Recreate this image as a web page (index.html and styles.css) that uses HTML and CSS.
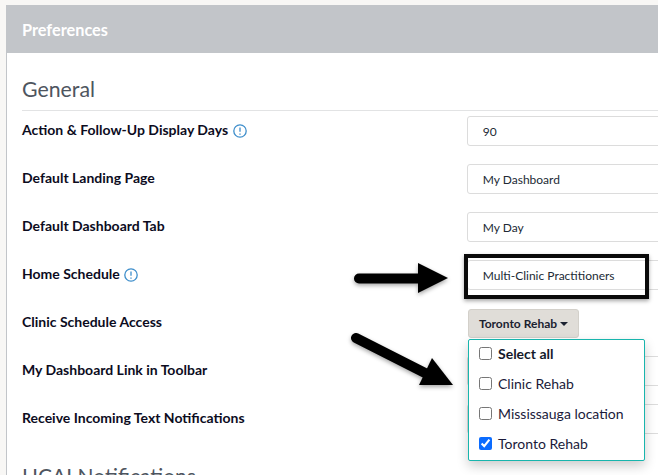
FILE: index.html
```html
<!DOCTYPE html>
<html lang="en">
<head>
<meta charset="utf-8">
<title>Preferences</title>
<link rel="stylesheet" href="styles.css">
</head>
<body>
<main class="panel">
  <header class="panel-head">Preferences</header>
  <div class="panel-body">
    <h2 class="section-title">General</h2>
    <div class="rows">
      <div class="row">
        <span class="label">Action &amp; Follow-Up Display Days
          <svg class="info" viewBox="0 0 14 14"><circle cx="7" cy="7" r="6.2"/><path d="M7 3.4v4.4M7 9.6v1.2"/></svg></span>
        <div class="input">90</div>
      </div>
      <div class="row"><span class="label">Default Landing Page</span><div class="input">My Dashboard</div></div>
      <div class="row"><span class="label">Default Dashboard Tab</span><div class="input">My Day</div></div>
      <div class="row">
        <span class="label">Home Schedule
          <svg class="info" viewBox="0 0 14 14"><circle cx="7" cy="7" r="6.2"/><path d="M7 3.4v4.4M7 9.6v1.2"/></svg></span>
        <div class="input">Multi-Clinic Practitioners</div>
      </div>
      <div class="row">
        <span class="label">Clinic Schedule Access</span>
        <div class="control">
          <button class="drop-btn">Toronto Rehab<span class="caret"></span></button>
          <ul class="menu">
            <li class="menu-item strong"><input type="checkbox">Select all</li>
            <li class="menu-item"><input type="checkbox">Clinic Rehab</li>
            <li class="menu-item"><input type="checkbox">Mississauga location</li>
            <li class="menu-item"><input type="checkbox" checked>Toronto Rehab</li>
          </ul>
        </div>
      </div>
      <div class="row"><span class="label">My Dashboard Link in Toolbar</span><div class="input"></div></div>
      <div class="row"><span class="label">Receive Incoming Text Notifications</span><div class="input"></div></div>
    </div>
    <h2 class="section-title next">HCAI Notifications</h2>
  </div>
</main>
<div class="highlight"></div>
<svg class="arrow arrow-one" viewBox="0 0 94 30"><path d="M5 15.5H68" stroke-width="10" stroke-linecap="round"/><path d="M64 0L94 15L64 30Z" class="head"/></svg>
<svg class="arrow arrow-two" viewBox="0 0 106 56"><path d="M7 6L78 42" stroke-width="10" stroke-linecap="round"/><path d="M83 26L104 53L70 53Z" class="head"/></svg>
</body>
</html>
```
FILE: styles.css
```css
* { box-sizing: border-box; }
html, body { margin: 0; height: 100%; overflow: hidden; }
body {
  background: #f8f7f5;
  font-family: Lato, "Liberation Sans", sans-serif;
  padding: 5px 0 0 6px;
  color: #0c0c1e;
}
.panel { width: 760px; background: #fff; border-left: 1px solid #c2c5c9; height: 600px; }
.panel-head {
  height: 48px;
  margin-left: -1px;
  background: #c2c5c9;
  color: #fff;
  font-size: 16.3px;
  font-weight: 700;
  line-height: 50px;
  padding-left: 16px;
}
.panel-body { padding: 0 0 0 15px; }
.section-title {
  margin: 0;
  height: 58px;
  padding-top: 22px;
  border-bottom: 1px solid #e2e3e4;
  font-size: 21.3px;
  font-weight: 400;
  line-height: 29px;
  color: #4e5560;
}
.section-title.next { border: 0; padding-top: 9px; font-size: 21px; }
.rows { display: flex; flex-direction: column; padding-top: 5px; }
.row { display: flex; height: 48px; position: relative; }
.label {
  width: 446px;
  font-size: 14px;
  font-weight: 700;
  line-height: 16px;
  padding-top: 6px;
  color: #0c0c1e;
}
.info {
  width: 14px;
  height: 14px;
  margin-left: 1px;
  vertical-align: -3px;
  fill: none;
  stroke: #3e8ecb;
  stroke-width: 1.3;
}
.input {
  width: 300px;
  height: 30px;
  border: 1px solid #dcdcdc;
  border-radius: 3px;
  background: #fff;
  font-size: 12px;
  line-height: 30px;
  padding-left: 15px;
  color: #222a35;
}
.control { position: relative; }
.drop-btn {
  display: block;
  width: 111px;
  height: 29px;
  margin-top: 1px;
  border: 1px solid #d3d0ca;
  border-radius: 3px;
  background: #e0ddd8;
  font: 700 12px Lato, "Liberation Sans", sans-serif;
  color: #1b2230;
  padding: 0;
}
.caret {
  display: inline-block;
  margin-left: 3px;
  vertical-align: 2px;
  border: 4px solid transparent;
  border-top-color: #1b2230;
  border-bottom: 0;
}
.menu {
  position: absolute;
  top: 31px;
  left: 0;
  z-index: 1;
  width: 177px;
  height: 122px;
  margin: 0;
  padding: 0 0 0 10px;
  list-style: none;
  background: #fff;
  border: 1px solid #18b5ad;
  border-radius: 2px;
  box-shadow: 0 5px 12px rgba(0, 0, 0, .2);
}
.menu-item {
  display: flex;
  align-items: center;
  height: 30px;
  padding-bottom: 4px;
  font-size: 14px;
  color: #1a1a3a;
}
.menu-item input {
  width: 13px;
  height: 13px;
  margin: 0 6px 0 0;
  accent-color: #0b6cff;
}
.strong { font-weight: 700; color: #14182a; }
.highlight {
  position: absolute;
  left: 464px;
  top: 254px;
  width: 185px;
  height: 45px;
  border: 4px solid #0a0a0a;
  box-shadow: 0 2px 4px rgba(0, 0, 0, .35);
}
.arrow {
  position: absolute;
  fill: none;
  stroke: #000;
  overflow: visible;
  filter: drop-shadow(0 2px 2px rgba(0, 0, 0, .35));
}
.arrow .head { fill: #000; stroke: none; }
.arrow-one { left: 354px; top: 263px; width: 94px; height: 30px; }
.arrow-two { left: 349px; top: 332px; width: 106px; height: 56px; }
```
